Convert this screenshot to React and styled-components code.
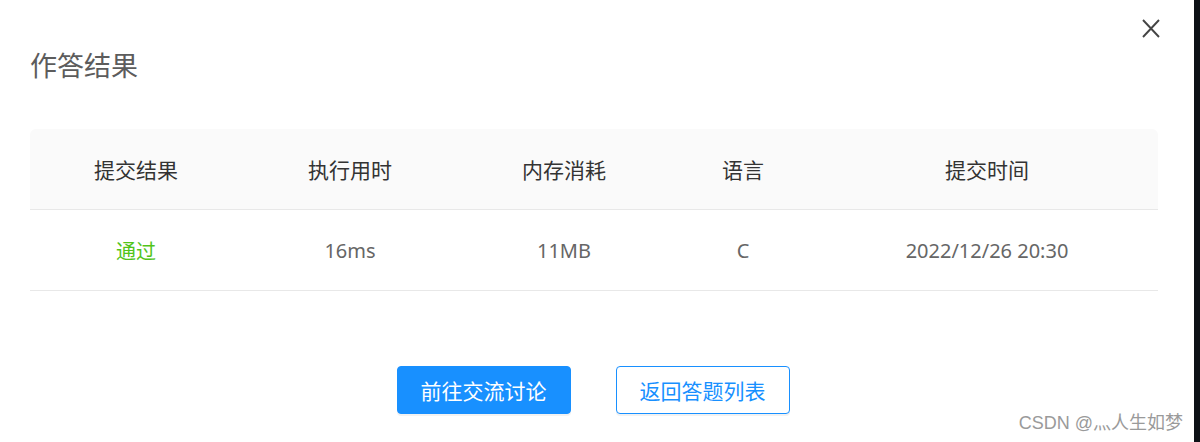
import React from 'react';
import styled, {createGlobalStyle} from 'styled-components';

const colors = {
  primary: '#1890ff',
  pass: '#52c41a',
  head: '#333333',
  text: '#666666',
  line: '#e8e8e8'
}

const columns = [
  {key: 'status', title: '提交结果', width: 212},
  {key: 'time', title: '执行用时', width: 216},
  {key: 'memory', title: '内存消耗', width: 212},
  {key: 'lang', title: '语言', width: 146},
  {key: 'date', title: '提交时间', width: 342}
]

const result = {
  status: '通过',
  time: '16ms',
  memory: '11MB',
  lang: 'C',
  date: '2022/12/26 20:30'
}

const GlobalStyle = createGlobalStyle`
  html, body {
    margin: 0;
    padding: 0;
    background: #fff;
  }
  body {
    font-family: "Noto Sans", "Noto Sans CJK SC", sans-serif;
  }
`;

const Page = styled.div`
  display: flex;
  height: 442px;
  overflow: hidden;
`;

const Dialog = styled.div`
  position: relative;
  width: 1194px;
  background: #fff;
`;

const Edge = styled.div`
  flex: 1;
  background: #0e1116;
`;

const Title = styled.h2`
  margin: 0;
  padding: 48px 30px 0;
  font-size: 27px;
  line-height: 36px;
  font-weight: 400;
  color: #5c5c5c;
`;

const Close = styled.button`
  position: absolute;
  top: 18px;
  right: 33px;
  width: 20px;
  height: 20px;
  padding: 0;
  border: 0;
  background: none;
  cursor: pointer;
  display: flex;
  align-items: center;
  justify-content: center;
`;

const Table = styled.div`
  width: 1128px;
  margin: 45px 0 0 30px;
`;

const Row = styled.div`
  display: flex;
  height: 81px;
  border-bottom: 1px solid ${colors.line};
  box-sizing: border-box;
  background: ${props => props.head ? '#fafafa' : '#fff'};
  border-radius: ${props => props.head ? '6px 6px 0 0' : '0'};
`;

const Cell = styled.div`
  display: flex;
  align-items: center;
  justify-content: center;
  font-size: ${props => props.head ? '21px' : '20px'};
  color: ${props => props.color || colors.text};
`;

const Actions = styled.div`
  display: flex;
  justify-content: center;
  gap: 45px;
  margin-top: 75px;
  padding-right: 8px;
`;

const Button = styled.button`
  width: 174px;
  height: 48px;
  box-sizing: border-box;
  border-radius: 4px;
  font-family: inherit;
  font-size: 21px;
  cursor: pointer;
  box-shadow: 0 2px 0 rgba(0, 0, 0, 0.05);
  border: 1px solid ${colors.primary};
  background: ${props => props.primary ? colors.primary : '#fff'};
  color: ${props => props.primary ? '#fff' : colors.primary};
`;

const Watermark = styled.div`
  position: absolute;
  right: 11px;
  bottom: 8px;
  font-family: "Liberation Sans", "Noto Sans CJK SC", sans-serif;
  font-size: 18px;
  color: #9a9a9a;
  text-shadow: 0 0 2px #fff;
  pointer-events: none;
`;

const CloseIcon = () => (
  <svg width="18" height="19" viewBox="0 0 18 19">
    <path d="M1 1 L17 18 M17 1 L1 18" stroke="#444" strokeWidth="1.9" fill="none" />
  </svg>
)

const App = () => (
  <Page>
    <GlobalStyle />
    <Dialog>
      <Title>作答结果</Title>
      <Close aria-label="关闭"><CloseIcon /></Close>
      <Table>
        <Row head>
          {columns.map(c => (
            <Cell key={c.key} head color={colors.head} style={{width: c.width}}>{c.title}</Cell>
          ))}
        </Row>
        <Row>
          {columns.map(c => (
            <Cell key={c.key} color={c.key === 'status' ? colors.pass : null} style={{width: c.width}}>
              {result[c.key]}
            </Cell>
          ))}
        </Row>
      </Table>
      <Actions>
        <Button primary>前往交流讨论</Button>
        <Button>返回答题列表</Button>
      </Actions>
      <Watermark>CSDN @灬人生如梦</Watermark>
    </Dialog>
    <Edge />
  </Page>
)

export default App
